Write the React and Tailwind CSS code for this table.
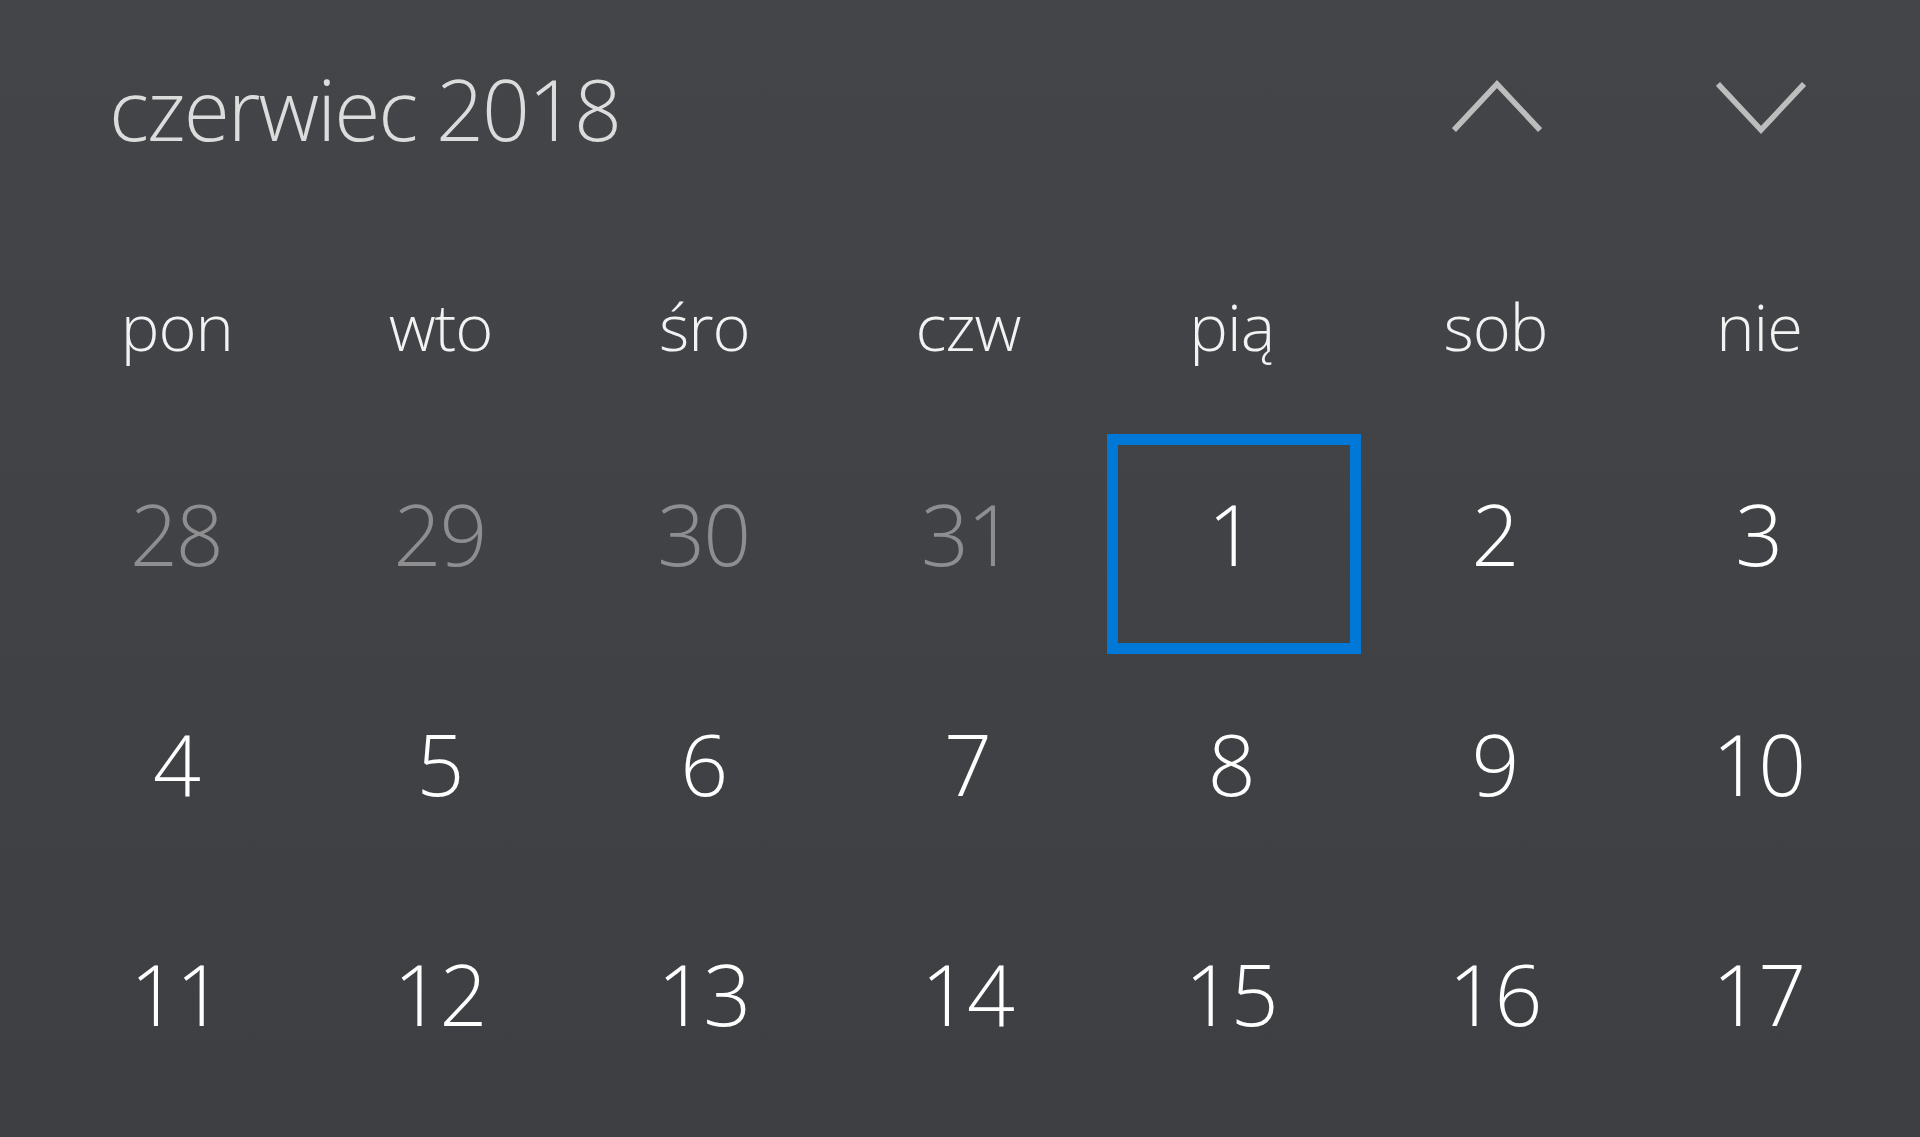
import React from 'react';

const dayNames = ['pon', 'wto', 'śro', 'czw', 'pią', 'sob', 'nie'];

const weeks = [
    [
        { d: 28, muted: true },
        { d: 29, muted: true },
        { d: 30, muted: true },
        { d: 31, muted: true },
        { d: 1, today: true },
        { d: 2 },
        { d: 3 },
    ],
    [{ d: 4 }, { d: 5 }, { d: 6 }, { d: 7 }, { d: 8 }, { d: 9 }, { d: 10 }],
    [{ d: 11 }, { d: 12 }, { d: 13 }, { d: 14 }, { d: 15 }, { d: 16 }, { d: 17 }],
];

const Chevron = ({ up }) => (
    <svg width="90" height="56" viewBox="0 0 90 56" fill="none" stroke="#bdbdbd" strokeWidth="5.5" strokeLinecap="butt" strokeLinejoin="miter">
        {up ? <polyline points="2,50 45,4 88,50" /> : <polyline points="2,4 45,50 88,4" />}
    </svg>
);

const DayCell = ({ day }) => (
    <div className="h-[230px] p-[5px]">
        <div
            className={`h-full border-[11px] pt-[47px] pr-[6px] flex justify-center ${
                day.today ? 'border-[#0078d7]' : 'border-transparent'
            }`}
        >
            <span
                className={`text-[84px] leading-none font-light tracking-[-2px] ${
                    day.muted ? 'text-[#8e8e90]' : 'text-white'
                }`}
            >
                {day.d}
            </span>
        </div>
    </div>
);

export default function App() {
    return (
        <div
            className="w-full h-[1137px] overflow-hidden bg-linear-to-b from-[#434549] to-[#3d3f43] pl-[47px]"
            style={{ fontFamily: '"Open Sans", "Noto Sans", sans-serif' }}
        >
            <div className="w-[1846px]">
                {/* Month header */}
                <div className="grid grid-cols-7 h-[230px]">
                    <div className="col-span-5 pl-[62px] pt-[67px]">
                        <span className="text-[84px] leading-none font-light tracking-[-2px] text-[#dcdcdc]">
                            czerwiec 2018
                        </span>
                    </div>
                    <div className="flex justify-center pt-[80px]">
                        <Chevron up />
                    </div>
                    <div className="flex justify-center pt-[80px]">
                        <Chevron />
                    </div>
                </div>

                {/* Day names */}
                <div className="grid grid-cols-7 h-[199px]">
                    {dayNames.map((name) => (
                        <div key={name} className="flex justify-center pt-[64px] pr-[4px]">
                            <span className="text-[65px] leading-none font-light tracking-[-1px] text-[#f2f2f2]">
                                {name}
                            </span>
                        </div>
                    ))}
                </div>

                {/* Days */}
                {weeks.map((week, i) => (
                    <div key={i} className="grid grid-cols-7">
                        {week.map((day) => (
                            <DayCell key={day.d} day={day} />
                        ))}
                    </div>
                ))}
            </div>
        </div>
    );
}
